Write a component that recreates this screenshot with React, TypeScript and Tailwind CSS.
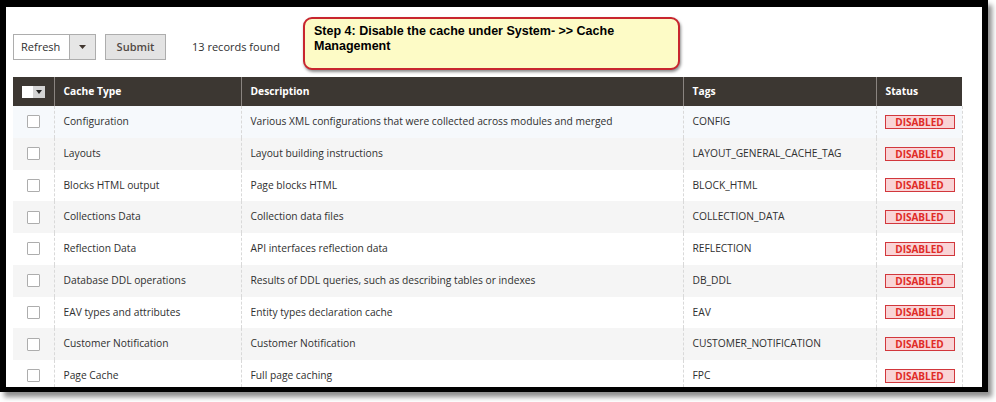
import React from "react";

const rows: [string, string, string][] = [
  ["Configuration", "Various XML configurations that were collected across modules and merged", "CONFIG"],
  ["Layouts", "Layout building instructions", "LAYOUT_GENERAL_CACHE_TAG"],
  ["Blocks HTML output", "Page blocks HTML", "BLOCK_HTML"],
  ["Collections Data", "Collection data files", "COLLECTION_DATA"],
  ["Reflection Data", "API interfaces reflection data", "REFLECTION"],
  ["Database DDL operations", "Results of DDL queries, such as describing tables or indexes", "DB_DDL"],
  ["EAV types and attributes", "Entity types declaration cache", "EAV"],
  ["Customer Notification", "Customer Notification", "CUSTOMER_NOTIFICATION"],
  ["Page Cache", "Full page caching", "FPC"],
];

export default function App() {
  return (
    <div className="w-[996px] h-[402px] bg-white" style={{ fontFamily: '"Open Sans", sans-serif' }}>
      <div className="relative w-[988px] h-[392px] border-t-[7px] border-l-[6px] border-r-[6px] border-b-[5px] border-black bg-white shadow-[4px_5px_5px_rgba(0,0,0,0.45)] overflow-hidden">
        {/* toolbar */}
        <div className="flex items-center pl-[7px] pt-[27px] h-[53px]">
          <div className="flex h-[26px] w-[83px] border border-[#adadad] bg-white">
            <div className="flex-1 flex items-center pl-[7px] text-[11px] text-[#303030]">Refresh</div>
            <div className="w-[26px] border-l border-[#adadad] bg-[#e6e6e6] flex items-center justify-center">
              <svg width="7" height="4" viewBox="0 0 7 4"><path d="M0 0h7L3.5 4z" fill="#41362f" /></svg>
            </div>
          </div>
          <div className="ml-[9px] h-[26px] w-[61px] border border-[#adadad] bg-[#e3e3e3] flex items-center justify-center text-[11px] font-semibold text-[#514943]">
            Submit
          </div>
          <div className="ml-[26px] text-[11px] text-[#303030]">13 records found</div>
        </div>

        {/* callout */}
        <div
          className="absolute left-[297px] top-[10px] w-[377px] h-[53px] rounded-[9px] border-2 border-[#c8262e] bg-[#fdfbc6] shadow-[1px_2px_3px_rgba(0,0,0,0.45)] pl-[9px] pt-[5px] text-[12.5px] leading-[15px] font-bold text-black"
          style={{ fontFamily: '"Liberation Sans", Arial, sans-serif' }}
        >
          Step 4: Disable the cache under System- &gt;&gt; Cache
          <br />
          Management
        </div>

        {/* table */}
        <div className="ml-[7px] mt-[17px]">
          <table className="border-collapse table-fixed w-[949px] text-[10.25px] text-[#303030]">
            <colgroup>
              <col className="w-[41px]" />
              <col className="w-[187px]" />
              <col className="w-[442px]" />
              <col className="w-[193px]" />
              <col className="w-[86px]" />
            </colgroup>
            <thead>
              <tr className="h-[29px] bg-[#3c3732] text-white text-left text-[10.25px]">
                <th className="border-r border-[#8a8480] p-0">
                  <div className="flex justify-center">
                    <div className="flex h-[12px]">
                      <div className="w-[11px] bg-white" />
                      <div className="w-[12px] bg-[#d4d4d4] flex items-center justify-center">
                        <svg width="6" height="4" viewBox="0 0 6 4"><path d="M0 0h6L3 4z" fill="#222" /></svg>
                      </div>
                    </div>
                  </div>
                </th>
                <th className="border-r border-[#8a8480] pl-[9px] font-bold">Cache Type</th>
                <th className="border-r border-[#8a8480] pl-[9px] font-bold">Description</th>
                <th className="border-r border-[#8a8480] pl-[9px] font-bold">Tags</th>
                <th className="pl-[9px] font-bold">Status</th>
              </tr>
            </thead>
            <tbody>
              {rows.map((r, i) => (
                <tr
                  key={i}
                  className={
                    "h-[31.75px] " + (i === 0 ? "bg-[#f6f9fc]" : i % 2 === 1 ? "bg-[#f5f5f5]" : "bg-white")
                  }
                >
                  <td className="border-r border-dashed border-[#d9d9d9] p-0">
                    <div className="flex justify-center">
                      <div className="w-[13px] h-[13px] border border-[#adadad] rounded-[1px] bg-white" />
                    </div>
                  </td>
                  <td className="border-r border-dashed border-[#d9d9d9] pl-[9px]">{r[0]}</td>
                  <td className="border-r border-dashed border-[#d9d9d9] pl-[9px]">{r[1]}</td>
                  <td className="border-r border-dashed border-[#d9d9d9] pl-[9px]">{r[2]}</td>
                  <td className="border-r border-dashed border-[#d9d9d9] pl-[8px]">
                    <div className="w-[70px] h-[14px] border border-[#d2373c] bg-[#f9d4d6] text-[#e02b27] font-bold text-[10px] leading-[12px] text-center">
                      DISABLED
                    </div>
                  </td>
                </tr>
              ))}
            </tbody>
          </table>
        </div>
      </div>
    </div>
  );
}
